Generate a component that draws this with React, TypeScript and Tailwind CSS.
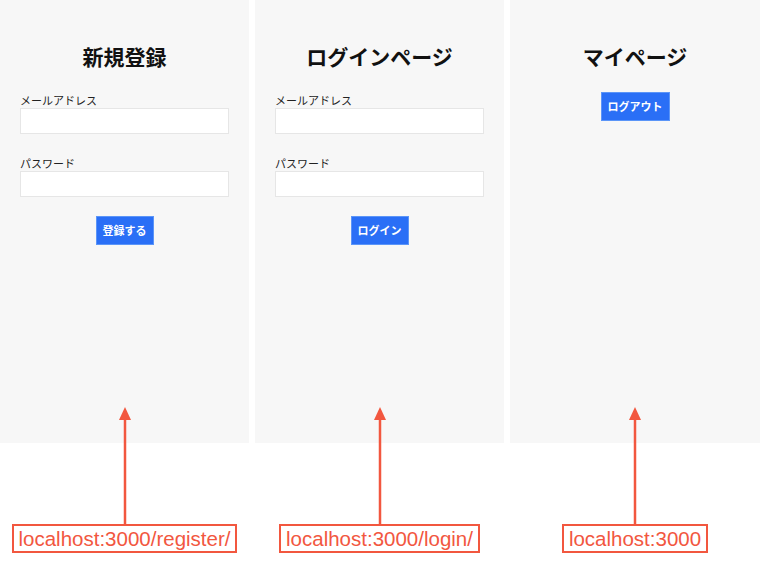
import React from 'react';

const jp = { fontFamily: '"Noto Sans CJK JP", "Noto Sans", sans-serif' };

const Field: React.FC<{ label: string; first?: boolean }> = ({ label, first }) => (
  <div className={`w-full ${first ? 'mt-[22px]' : 'mt-[21px]'}`}>
    <div className="text-[11px] leading-[16px] text-[#222]">{label}</div>
    <div className="h-[26px] w-full border border-[#e6e6e6] bg-white" />
  </div>
);

const Button: React.FC<{ label: string; className?: string }> = ({ label, className }) => (
  <button
    className={`flex h-[29px] items-center justify-center border border-[#5b95f8] bg-[#2a6ff6] px-[6px] text-[11px] font-bold text-white ${className ?? ''}`}
  >
    {label}
  </button>
);

const Title: React.FC<{ text: string }> = ({ text }) => (
  <h1 className="text-[21px] font-bold leading-[28px] text-[#111]">{text}</h1>
);

const Annotation: React.FC<{ url: string }> = ({ url }) => (
  <div className="relative z-10 -mt-[36px] flex flex-col items-center">
    <svg width="14" height="117" viewBox="0 0 14 117">
      <line x1="7" y1="10" x2="7" y2="117" stroke="#f2573f" strokeWidth="2.5" />
      <polygon points="7,0 1,13 13,13" fill="#f2573f" />
    </svg>
    <div
      className="border-2 border-[#f2573f] px-[5px] text-[20.5px] leading-[25px] text-[#f2573f]"
      style={{ fontFamily: '"Liberation Sans", Arial, sans-serif' }}
    >
      {url}
    </div>
  </div>
);

export default function App() {
  return (
    <div className="flex h-[570px] w-[760px] gap-[6px] overflow-hidden bg-white" style={jp}>
      <div className="flex w-[249px] flex-col">
        <div className="flex h-[443px] flex-col items-center bg-[#f7f7f7] px-[20px] pt-[42px]">
          <Title text="新規登録" />
          <Field label="メールアドレス" first />
          <Field label="パスワード" />
          <Button label="登録する" className="mt-[19px]" />
        </div>
        <Annotation url="localhost:3000/register/" />
      </div>

      <div className="flex w-[249px] flex-col">
        <div className="flex h-[443px] flex-col items-center bg-[#f7f7f7] px-[20px] pt-[42px]">
          <Title text="ログインページ" />
          <Field label="メールアドレス" first />
          <Field label="パスワード" />
          <Button label="ログイン" className="mt-[19px]" />
        </div>
        <Annotation url="localhost:3000/login/" />
      </div>

      <div className="flex w-[250px] flex-col">
        <div className="flex h-[443px] flex-col items-center bg-[#f7f7f7] px-[20px] pt-[42px]">
          <Title text="マイページ" />
          <Button label="ログアウト" className="mt-[22px]" />
        </div>
        <Annotation url="localhost:3000" />
      </div>
    </div>
  );
}
